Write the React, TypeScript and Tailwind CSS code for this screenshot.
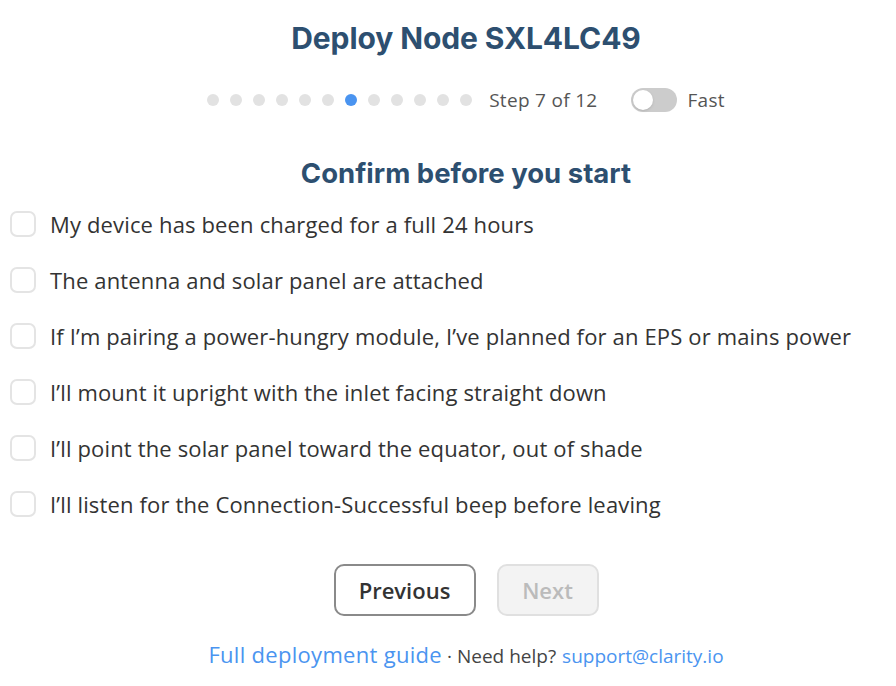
import React, { useState } from 'react';

const items = [
  'My device has been charged for a full 24 hours',
  'The antenna and solar panel are attached',
  'If I\u2019m pairing a power-hungry module, I\u2019ve planned for an EPS or mains power',
  'I\u2019ll mount it upright with the inlet facing straight down',
  'I\u2019ll point the solar panel toward the equator, out of shade',
  'I\u2019ll listen for the Connection-Successful beep before leaving',
];

const App: React.FC = () => {
  const [checked, setChecked] = useState<boolean[]>(items.map(() => false));
  const [fast, setFast] = useState(false);
  const step = 7;
  const total = 12;

  const headFont = { fontFamily: 'Inter, "Noto Sans", sans-serif' };

  return (
    <div className="w-full min-h-screen bg-white overflow-hidden" style={{ fontFamily: '"Open Sans", "Noto Sans", sans-serif' }}>
      <div className="w-[932px] flex flex-col items-center pt-[19px]">
        <h1 className="text-[30px] leading-[38px] font-bold text-[#2d4f70] tracking-[-0.1px]" style={headFont}>
          Deploy Node SXL4LC49
        </h1>

        {/* progress */}
        <div className="flex items-center mt-[30px] h-[26px]">
          <div className="flex items-center gap-[11px]">
            {Array.from({ length: total }).map((_, i) => (
              <span
                key={i}
                className={`block w-[12px] h-[12px] rounded-full ${i === step - 1 ? 'bg-[#4a94f0]' : 'bg-[#e2e2e2]'}`}
              />
            ))}
          </div>
          <span className="ml-[17px] text-[19px] tracking-[0.3px] text-[#555]">Step {step} of {total}</span>
          <button
            onClick={() => setFast(!fast)}
            className={`ml-[34px] w-[46px] h-[24px] rounded-full flex items-center px-[2px] ${fast ? 'bg-[#4a94f0] justify-end' : 'bg-[#cccccc] justify-start'}`}
          >
            <span className="block w-[20px] h-[20px] rounded-full bg-white shadow-sm" />
          </button>
          <span className="ml-[10px] text-[19px] tracking-[0.3px] text-[#555]">Fast</span>
        </div>

        <h2 className="mt-[43px] text-[27.5px] leading-[34px] font-bold text-[#2d4f70]" style={headFont}>
          Confirm before you start
        </h2>

        <ul className="self-stretch pl-[10px] mt-[18px] flex flex-col gap-[24px]">
          {items.map((t, i) => (
            <li key={i} className="flex items-center h-[32px]">
              <button
                onClick={() => setChecked(checked.map((c, j) => (j === i ? !c : c)))}
                className={`w-[26px] h-[26px] rounded-[7px] border-2 ${checked[i] ? 'bg-[#4a94f0] border-[#4a94f0]' : 'bg-white border-[#e4e4e4]'}`}
              />
              <span className="ml-[14px] text-[22px] tracking-[0.15px] text-[#333]">{t}</span>
            </li>
          ))}
        </ul>

        <div className="flex gap-[21px] mt-[44px]">
          <button className="w-[142px] h-[52px] rounded-[10px] border-2 border-[#8a8a8a] bg-white text-[22px] font-semibold text-[#333]">
            Previous
          </button>
          <button disabled className="w-[102px] h-[52px] rounded-[10px] border-2 border-[#e0e0e0] bg-[#f3f3f3] text-[22px] font-semibold text-[#bbb]">
            Next
          </button>
        </div>

        <div className="mt-[22px] flex items-baseline">
          <a className="text-[22px] tracking-[0.3px] text-[#4a94f0]">Full deployment guide</a>
          <span className="text-[19px] text-[#444] ml-[5px]">· Need help?</span>
          <a className="text-[19px] text-[#4a94f0] ml-[6px]">support@clarity.io</a>
        </div>
      </div>
    </div>
  );
};

export default App;
